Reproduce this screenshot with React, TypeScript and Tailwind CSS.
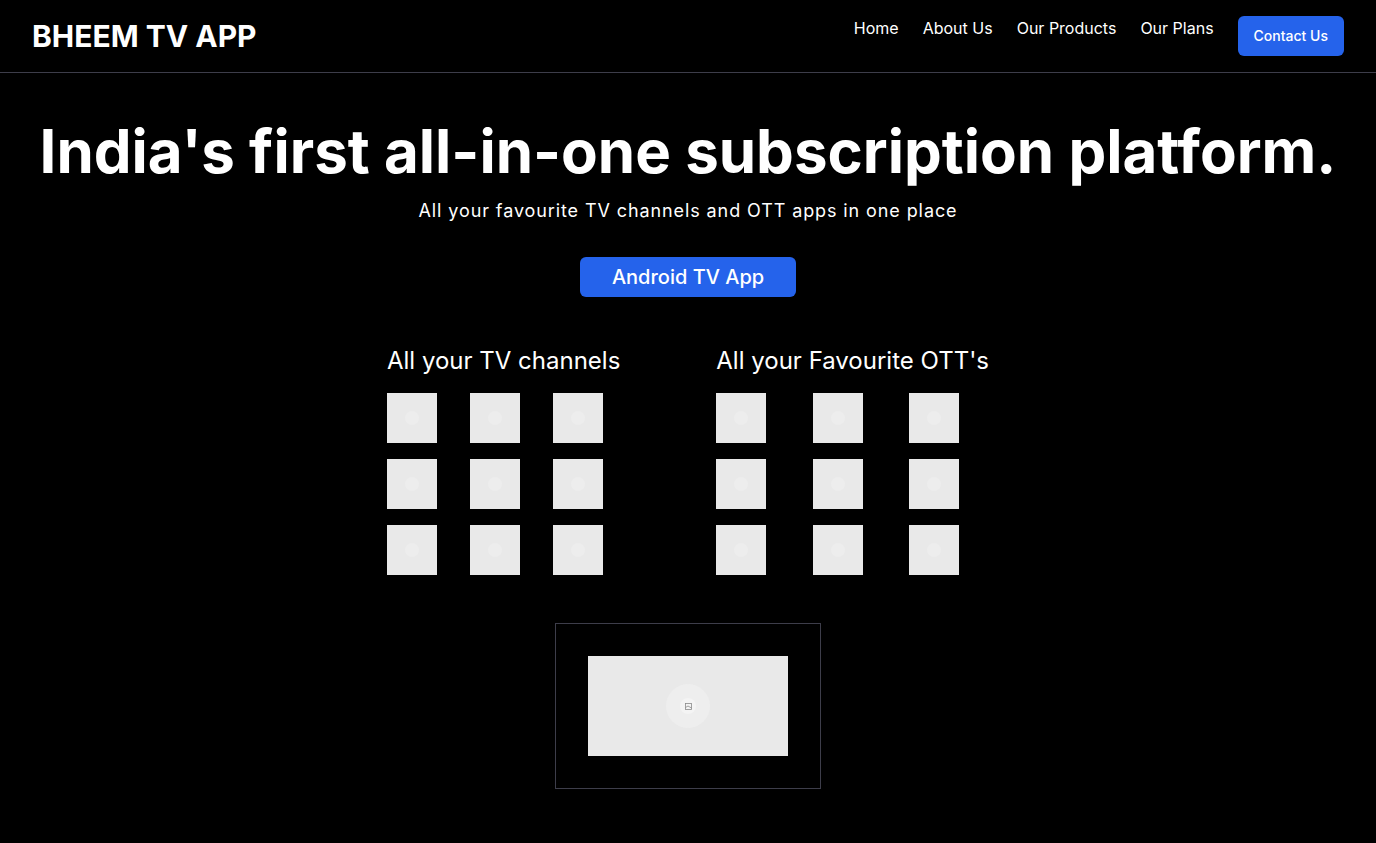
import React from 'react';

const navItems = ['Home', 'About Us', 'Our Products', 'Our Plans'];

// broken-image style placeholder tile
const Thumb: React.FC = () => (
  <div className="w-[50px] h-[50px] bg-[#e9e9e9] flex items-center justify-center">
    <div className="w-3.5 h-3.5 rounded-full bg-[#ededed]" />
  </div>
);

const ChannelGroup: React.FC<{ title: string }> = ({ title }) => (
  <div className="flex flex-col">
    <h2 className="text-2xl text-white mb-4">{title}</h2>
    <div className="grid grid-cols-3 gap-4">
      {Array.from({ length: 9 }).map((_, i) => (
        <Thumb key={i} />
      ))}
    </div>
  </div>
);

const App: React.FC = () => {
  return (
    <div className="min-h-[843px] bg-black text-white font-['Inter',sans-serif]">
      {/* Header */}
      <header className="border-b border-[#3d3d4a]">
        <div className="flex items-center justify-between px-8 py-4">
          <span className="text-3xl font-bold">BHEEM TV APP</span>
          <nav className="flex items-start gap-6">
            {navItems.map((item) => (
              <a key={item} href="#" className="text-base text-white leading-6">
                {item}
              </a>
            ))}
            <button className="h-10 px-4 rounded-md bg-[#2563eb] text-sm font-medium text-white">
              Contact Us
            </button>
          </nav>
        </div>
      </header>

      {/* Hero */}
      <main className="flex flex-col items-center pt-12 pb-12">
        <h1 className="text-6xl font-bold leading-none text-center">
          India's first all-in-one subscription platform.
        </h1>
        <p className="mt-4 text-lg tracking-wider">All your favourite TV channels and OTT apps in one place</p>
        <button className="mt-8 px-8 py-1.5 rounded-md bg-[#2563eb] text-xl font-medium text-white">
          Android TV App
        </button>

        <div className="mt-12 flex gap-24">
          <ChannelGroup title="All your TV channels" />
          <ChannelGroup title="All your Favourite OTT's" />
        </div>

        <div className="mt-12 border border-[#3d3d4a] p-8">
          <div className="w-[200px] h-[100px] bg-[#e9e9e9] flex items-center justify-center">
            <div className="w-11 h-11 rounded-full bg-[#eeeeee] flex items-center justify-center">
              <div className="w-4 h-4 rounded-full bg-[#f4f4f4] flex items-center justify-center">
                <svg width="7" height="7" viewBox="0 0 7 7" fill="none" stroke="#8a8a8a" strokeWidth="0.8">
                  <rect x="0.5" y="0.5" width="6" height="6" />
                  <path d="M0.5 4.5 L3 3 L6.5 5" />
                </svg>
              </div>
            </div>
          </div>
        </div>
      </main>
    </div>
  );
};

export default App;
